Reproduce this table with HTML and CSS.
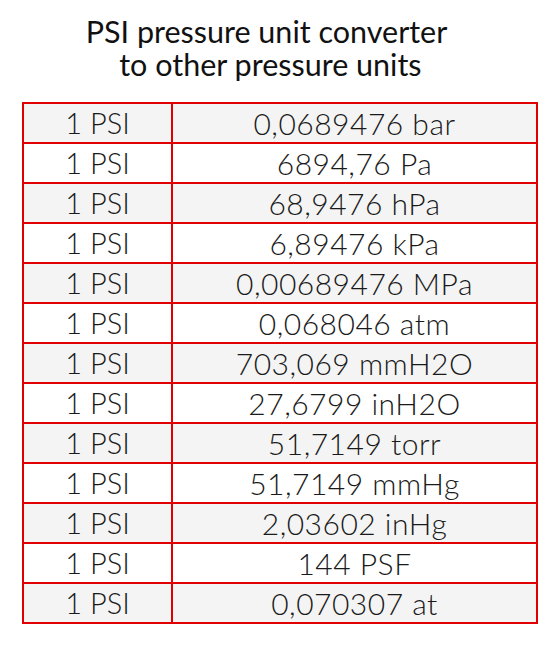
FILE: index.html
```html
<!DOCTYPE html>
<html>
<head>
<meta charset="utf-8">
<link rel="stylesheet" href="styles.css">
</head>
<body>
<div class="page">
  <h1 class="title">PSI pressure unit converter<br>&nbsp;to other pressure units</h1>
  <table class="conv">
    <tbody>
      <tr><td class="k">1 PSI</td><td class="v">0,0689476 bar</td></tr>
      <tr><td class="k">1 PSI</td><td class="v">6894,76 Pa</td></tr>
      <tr><td class="k">1 PSI</td><td class="v">68,9476 hPa</td></tr>
      <tr><td class="k">1 PSI</td><td class="v">6,89476 kPa</td></tr>
      <tr><td class="k">1 PSI</td><td class="v">0,00689476 MPa</td></tr>
      <tr><td class="k">1 PSI</td><td class="v">0,068046 atm</td></tr>
      <tr><td class="k">1 PSI</td><td class="v">703,069 mmH2O</td></tr>
      <tr><td class="k">1 PSI</td><td class="v">27,6799 inH2O</td></tr>
      <tr><td class="k">1 PSI</td><td class="v">51,7149 torr</td></tr>
      <tr><td class="k">1 PSI</td><td class="v">51,7149 mmHg</td></tr>
      <tr><td class="k">1 PSI</td><td class="v">2,03602 inHg</td></tr>
      <tr><td class="k">1 PSI</td><td class="v">144 PSF</td></tr>
      <tr><td class="k">1 PSI</td><td class="v">0,070307 at</td></tr>
    </tbody>
  </table>
</div>
</body>
</html>
```
FILE: styles.css
```css
html, body {
  margin: 0;
  padding: 0;
  background: #ffffff;
}
.page {
  padding: 15px 0 0 0;
}
.title {
  margin: 0;
  padding-right: 26px;
  text-align: center;
  font-family: Lato, sans-serif;
  font-weight: 400;
  font-size: 30.5px;
  line-height: 33px;
  color: #111;
}
.conv {
  margin: 21px 0 0 22px;
  width: 516px;
  border-collapse: collapse;
  font-family: Lato, sans-serif;
  font-weight: 300;
  font-size: 29px;
  color: #1a1a1a;
}
.conv td {
  border: 2px solid #e00000;
  height: 38px;
  padding: 0;
  text-align: center;
  line-height: 36px;
}
.conv td.k {
  width: 147px;
}
.conv td.v {
  font-size: 30px;
  letter-spacing: 0.5px;
}
.conv tr:nth-child(odd) td {
  background: #f4f4f4;
}
```
